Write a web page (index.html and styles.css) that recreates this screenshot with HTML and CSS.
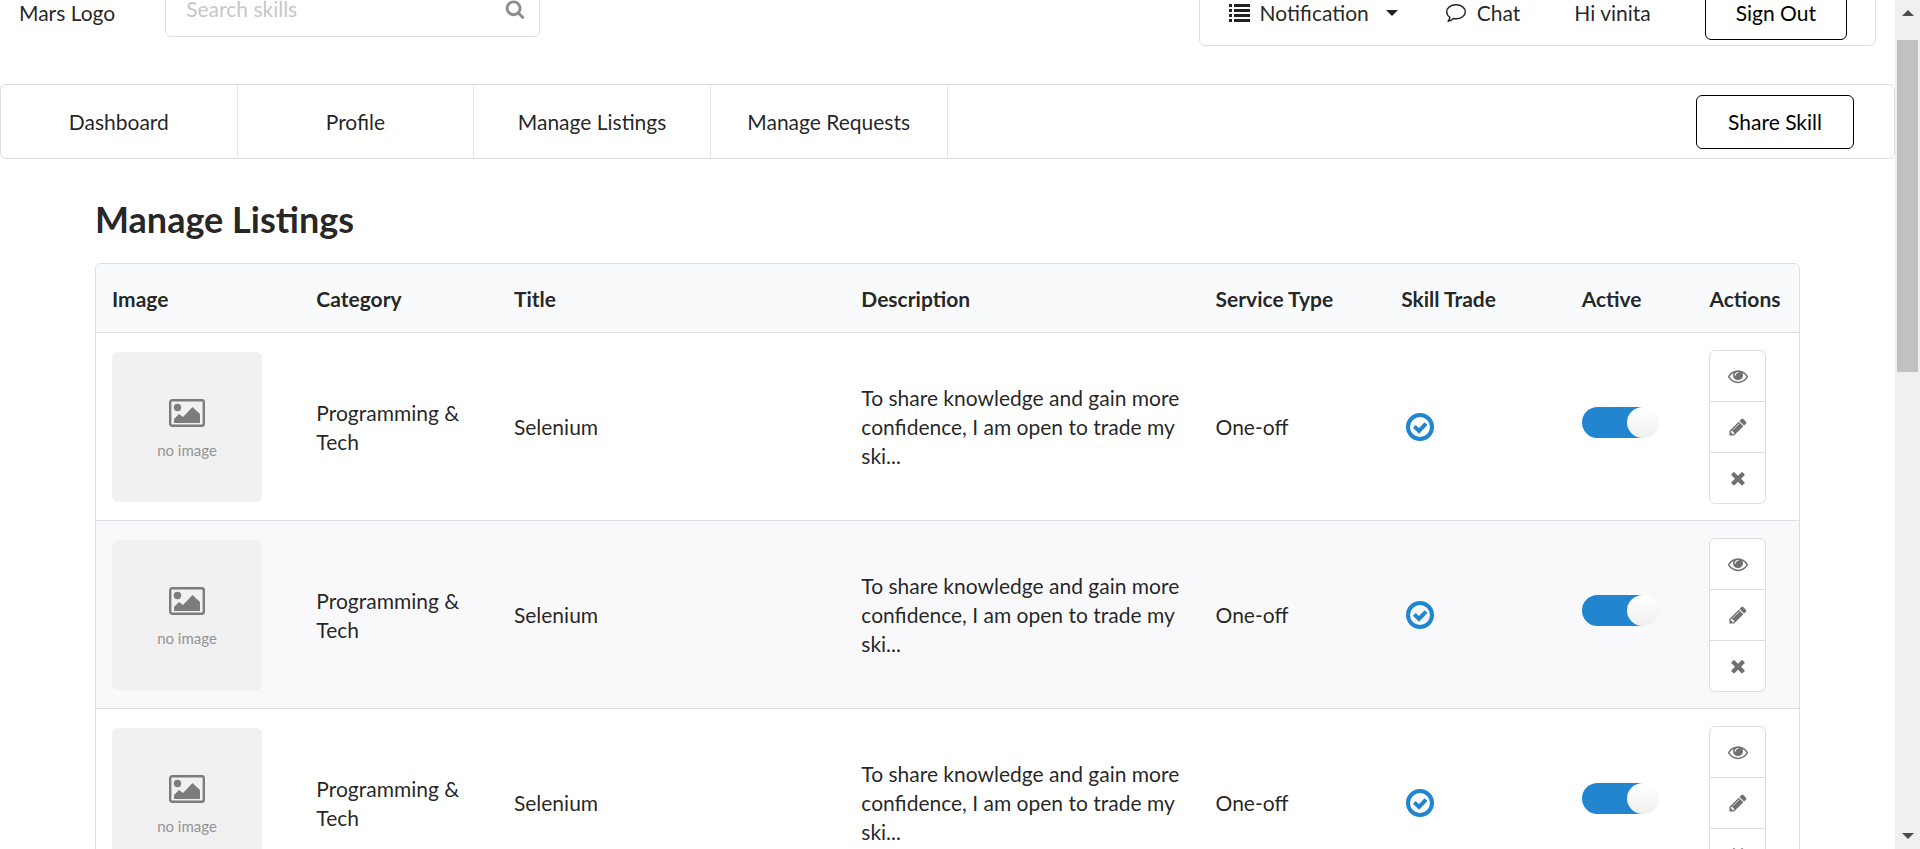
FILE: index.html
```
<!DOCTYPE html>
<html lang="en">
<head>
<meta charset="utf-8">
<title>Manage Listings</title>
<link rel="stylesheet" href="styles.css">
</head>
<body>
<svg class="sprite" aria-hidden="true">
  <symbol id="i-search" viewBox="0 0 1792 1792"><path d="M1216 832q0-185-131.500-316.500t-316.500-131.500-316.500 131.500-131.500 316.500 131.500 316.500 316.500 131.500 316.500-131.500 131.500-316.500zm512 832q0 52-38 90t-90 38q-54 0-90-38l-343-342q-179 124-399 124-143 0-273.500-55.500t-225-150-150-225-55.500-273.500 55.500-273.500 150-225 225-150 273.500-55.500 273.500 55.500 225 150 150 225 55.500 273.500q0 220-124 399l343 343q37 37 37 90z"/></symbol>
  <symbol id="i-list" viewBox="0 0 21 18"><path d="M0 0h3v3H0zM5 0h16v3H5zM0 5h3v3H0zM5 5h16v3H5zM0 10h3v3H0zM5 10h16v3H5zM0 15h3v3H0zM5 15h16v3H5z"/></symbol>
  <symbol id="i-chat" viewBox="0 0 22 20"><path d="M11 1.800c5.300 0 9.300 3.100 9.300 7s-4 7-9.300 7c-.9 0-1.800-.1-2.600-.3-1.500 1.500-3.300 2.400-5.300 2.700 1-1.100 1.600-2.200 1.800-3.900C2.900 13 1.700 11 1.700 8.800c0-3.900 4-7 9.300-7z" fill="none" stroke="currentColor" stroke-width="1.400" stroke-linejoin="round"/></symbol>
  <symbol id="i-eye" viewBox="0 0 1792 1792"><path d="M1664 960q-152-236-381-353 61 104 61 225 0 185-131.500 316.500t-316.500 131.500-316.500-131.500-131.500-316.500q0-121 61-225-229 117-381 353 133 205 333.500 326.500t434.500 121.500 434.500-121.500 333.500-326.500zm-720-384q0-20-14-34t-34-14q-125 0-214.500 89.500t-89.500 214.500q0 20 14 34t34 14 34-14 14-34q0-86 61-147t147-61q20 0 34-14t14-34zm848 384q0 34-20 69-140 230-376.500 368.500t-499.500 138.500-499.500-139-376.500-368q-20-35-20-69t20-69q140-229 376.500-368t499.500-139 499.500 139 376.500 368q20 35 20 69z"/></symbol>
  <symbol id="i-pencil" viewBox="0 0 1792 1792"><path d="M491 1536l91-91-235-235-91 91v107h128v128h107zm523-928q0-22-22-22-10 0-17 7l-542 542q-7 7-7 17 0 22 22 22 10 0 17-7l542-542q7-7 7-17zm-54-192l416 416-832 832h-416v-416zm683 96q0 53-37 90l-166 166-416-416 166-165q36-38 90-38 53 0 91 38l235 234q37 39 37 91z"/></symbol>
  <symbol id="i-remove" viewBox="0 0 1792 1792"><path d="M1490 1322q0 40-28 68l-136 136q-28 28-68 28t-68-28l-294-294-294 294q-28 28-68 28t-68-28l-136-136q-28-28-28-68t28-68l294-294-294-294q-28-28-28-68t28-68l136-136q28-28 68-28t68 28l294 294 294-294q28-28 68-28t68 28l136 136q28 28 28 68t-28 68l-294 294 294 294q28 28 28 68z"/></symbol>
  <symbol id="i-check" viewBox="0 0 28 28"><circle cx="14" cy="14" r="12" fill="none" stroke="currentColor" stroke-width="4"/><path d="M8.300 13.300l4.700 4.700 7-7.300" fill="none" stroke="currentColor" stroke-width="4"/></symbol>
  <symbol id="i-picture" viewBox="0 0 36 28"><rect x="1.200" y="1.200" width="33.600" height="25.600" rx="2" fill="none" stroke="currentColor" stroke-width="2.400"/><circle cx="8.500" cy="8.500" r="3.700"/><path d="M5 24v-4l5-5 4 3 9.500-10L31 15v9z"/></symbol>
</svg>
<div class="window">
  <div class="page">
    <header class="topbar">
      <span class="logo">Mars Logo</span>
      <div class="search">
        <input class="search-input" type="text" placeholder="Search skills" aria-label="Search skills">
        <button class="search-button" aria-label="Search"><svg class="icon"><use href="#i-search"/></svg></button>
      </div>
      <div class="account">
        <button class="account-item"><svg class="icon list-icon"><use href="#i-list"/></svg>Notification<span class="caret"></span></button>
        <a class="account-item" href="#"><svg class="icon chat-icon"><use href="#i-chat"/></svg>Chat</a>
        <span class="account-item">Hi vinita</span>
        <button class="outline-button">Sign Out</button>
      </div>
    </header>
    <nav class="menu">
      <a class="menu-item" href="#">Dashboard</a>
      <a class="menu-item" href="#">Profile</a>
      <a class="menu-item" href="#">Manage Listings</a>
      <a class="menu-item" href="#">Manage Requests</a>
      <button class="outline-button share">Share Skill</button>
    </nav>
    <main class="content">
      <h2 class="heading">Manage Listings</h2>
      <table class="listings">
        <colgroup><col class="c-image"><col class="c-category"><col class="c-title"><col class="c-description"><col class="c-service"><col class="c-trade"><col class="c-active"><col class="c-actions"></colgroup>
        <thead>
          <tr><th>Image</th><th>Category</th><th>Title</th><th>Description</th><th>Service Type</th><th>Skill Trade</th><th>Active</th><th>Actions</th></tr>
        </thead>
        <tbody>
          <tr>
            <td><div class="thumb"><svg class="thumb-icon"><use href="#i-picture"/></svg><span>no image</span></div></td>
            <td>Programming &amp; Tech</td><td>Selenium</td>
            <td>To share knowledge and gain more confidence, I am open to trade my ski...</td>
            <td>One-off</td>
            <td><svg class="check"><use href="#i-check"/></svg></td>
            <td><input class="toggle" type="checkbox" aria-label="Active" checked></td>
            <td><div class="actions"><button aria-label="View"><svg class="icon"><use href="#i-eye"/></svg></button><button aria-label="Edit"><svg class="icon"><use href="#i-pencil"/></svg></button><button aria-label="Remove"><svg class="icon"><use href="#i-remove"/></svg></button></div></td>
          </tr>
          <tr>
            <td><div class="thumb"><svg class="thumb-icon"><use href="#i-picture"/></svg><span>no image</span></div></td>
            <td>Programming &amp; Tech</td><td>Selenium</td>
            <td>To share knowledge and gain more confidence, I am open to trade my ski...</td>
            <td>One-off</td>
            <td><svg class="check"><use href="#i-check"/></svg></td>
            <td><input class="toggle" type="checkbox" aria-label="Active" checked></td>
            <td><div class="actions"><button aria-label="View"><svg class="icon"><use href="#i-eye"/></svg></button><button aria-label="Edit"><svg class="icon"><use href="#i-pencil"/></svg></button><button aria-label="Remove"><svg class="icon"><use href="#i-remove"/></svg></button></div></td>
          </tr>
          <tr>
            <td><div class="thumb"><svg class="thumb-icon"><use href="#i-picture"/></svg><span>no image</span></div></td>
            <td>Programming &amp; Tech</td><td>Selenium</td>
            <td>To share knowledge and gain more confidence, I am open to trade my ski...</td>
            <td>One-off</td>
            <td><svg class="check"><use href="#i-check"/></svg></td>
            <td><input class="toggle" type="checkbox" aria-label="Active" checked></td>
            <td><div class="actions"><button aria-label="View"><svg class="icon"><use href="#i-eye"/></svg></button><button aria-label="Edit"><svg class="icon"><use href="#i-pencil"/></svg></button><button aria-label="Remove"><svg class="icon"><use href="#i-remove"/></svg></button></div></td>
          </tr>
        </tbody>
      </table>
    </main>
  </div>
  <div class="scrollbar" aria-hidden="true">
    <span class="arrow arrow-up"></span>
    <span class="thumb-bar"></span>
    <span class="arrow arrow-down"></span>
  </div>
</div>
</body>
</html>
```

FILE: styles.css
```
* { box-sizing: border-box; }

body {
  margin: 0;
  background: #fff;
  color: rgba(0, 0, 0, .87);
  font: 21px/29px Lato, "Liberation Sans", sans-serif;
}

button, input { font: inherit; color: inherit; }
button { padding: 0; border: 0; background: none; cursor: pointer; }
a { color: inherit; text-decoration: none; }

.sprite { position: absolute; width: 0; height: 0; }
.icon { display: block; width: 20px; height: 20px; fill: currentColor; }

.window { display: flex; height: 100vh; overflow: hidden; }
.page { flex: 1; min-width: 0; height: 100%; overflow: hidden; }

/* The page is scrolled a little, so the top bar is partly out of view. */
.topbar {
  display: flex;
  align-items: center;
  margin-top: -21px;
  padding: 0 19px;
}
.logo { margin-right: 50px; }

.search {
  display: flex;
  align-items: center;
  width: 375px;
  height: 57px;
  margin-bottom: 8px;
  padding: 0 14px 0 20px;
  border: 1px solid #dededf;
  border-radius: 6px;
}
.search-input {
  flex: 1;
  min-width: 0;
  padding: 0;
  border: 0;
  outline: 0;
  background: none;
}
.search-input::placeholder { color: #c7c7c7; opacity: 1; }
.search-button { color: #8c8c8c; }

.account {
  display: flex;
  align-items: center;
  height: 67px;
  margin-left: auto;
  padding: 0 28px 0 29px;
  border: 1px solid #dededf;
  border-radius: 6px;
}
.account-item { display: flex; align-items: center; margin-right: 54px; }
.account-item:first-child { margin-right: 47px; }
.list-icon { width: 21px; height: 18px; margin-right: 10px; }
.chat-icon { width: 22px; height: 20px; margin-right: 10px; }
.caret {
  margin-left: 17px;
  border: 6px solid transparent;
  border-top-color: currentColor;
  border-bottom: 0;
}

.outline-button {
  height: 54px;
  padding: 0 31px;
  border: 1px solid #000;
  border-radius: 6px;
  color: #000;
  white-space: nowrap;
}
.account .outline-button { padding: 0 30px; }

.menu {
  display: flex;
  align-items: center;
  height: 75px;
  margin-top: 38px;
  border: 1px solid #dededf;
  border-radius: 6px;
}
.menu-item {
  display: flex;
  align-items: center;
  justify-content: center;
  align-self: stretch;
  width: 12.5%;
  border-right: 1px solid #e6e6e7;
}
.share { margin-left: auto; margin-right: 40px; }

.content { padding: 0 95px; }
.heading { margin: 36px 0 19px; font-size: 36px; line-height: 49px; }

.listings {
  width: 100%;
  table-layout: fixed;
  border: 1px solid #dededf;
  border-radius: 6px;
  border-spacing: 0;
  overflow: hidden;
}
.c-image { width: 12%; }
.c-category { width: 11.6%; }
.c-title { width: 20.4%; }
.c-description { width: 20.8%; }
.c-service { width: 10.9%; }
.c-trade { width: 10.6%; }
.c-active { width: 7.5%; }
.c-actions { width: 6.2%; }

th {
  height: 69px;
  padding: 0 0 0 16px;
  border-bottom: 1px solid #dededf;
  background: #f9fafb;
  text-align: left;
  white-space: nowrap;
}
td { height: 188px; padding: 16px; border-bottom: 1px solid #dededf; }
td:nth-child(4) { padding-right: 20px; }
td:last-child { padding-right: 0; }
tbody tr:nth-child(even) { background: #f9f9fc; }

.thumb {
  display: flex;
  flex-direction: column;
  align-items: center;
  width: 150px;
  height: 150px;
  padding-top: 47px;
  border-radius: 6px;
  background: #f1f1f1;
  color: #949494;
  font-size: 15px;
  line-height: 20px;
}
.thumb-icon { width: 36px; height: 28px; margin-bottom: 13px; color: #7c7c7c; fill: currentColor; }

.check { display: block; width: 28px; height: 28px; margin-left: 5px; color: #2185d0; }

.toggle {
  appearance: none;
  display: flex;
  justify-content: flex-end;
  width: 77px;
  height: 31px;
  margin: 0 0 8px;
  border-radius: 16px;
  background: linear-gradient(#2185d0, #2185d0) no-repeat 0 0 / 61px 100%;
}
.toggle::before {
  content: "";
  width: 32px;
  height: 31px;
  border-radius: 50%;
  background: linear-gradient(#fff, #f0f0f0);
}

.actions {
  display: flex;
  flex-direction: column;
  width: 57px;
  height: 154px;
  border: 1px solid #dededf;
  border-radius: 6px;
  background: #fff;
  color: #707070;
}
.actions button { flex: 1; display: grid; place-items: center; }
.actions button + button { border-top: 1px solid #dededf; }

.scrollbar {
  display: flex;
  flex-direction: column;
  align-items: center;
  width: 25px;
  padding: 10px 0;
  background: #f0f0f0;
}
.arrow { border: 6px solid transparent; color: #4d4d4d; }
.arrow-up { border-bottom-color: currentColor; border-top: 0; }
.arrow-down { margin-top: auto; border-top-color: currentColor; border-bottom: 0; }
.thumb-bar { width: 21px; height: 40%; margin-top: 24px; background: #c1c1c1; }
```
